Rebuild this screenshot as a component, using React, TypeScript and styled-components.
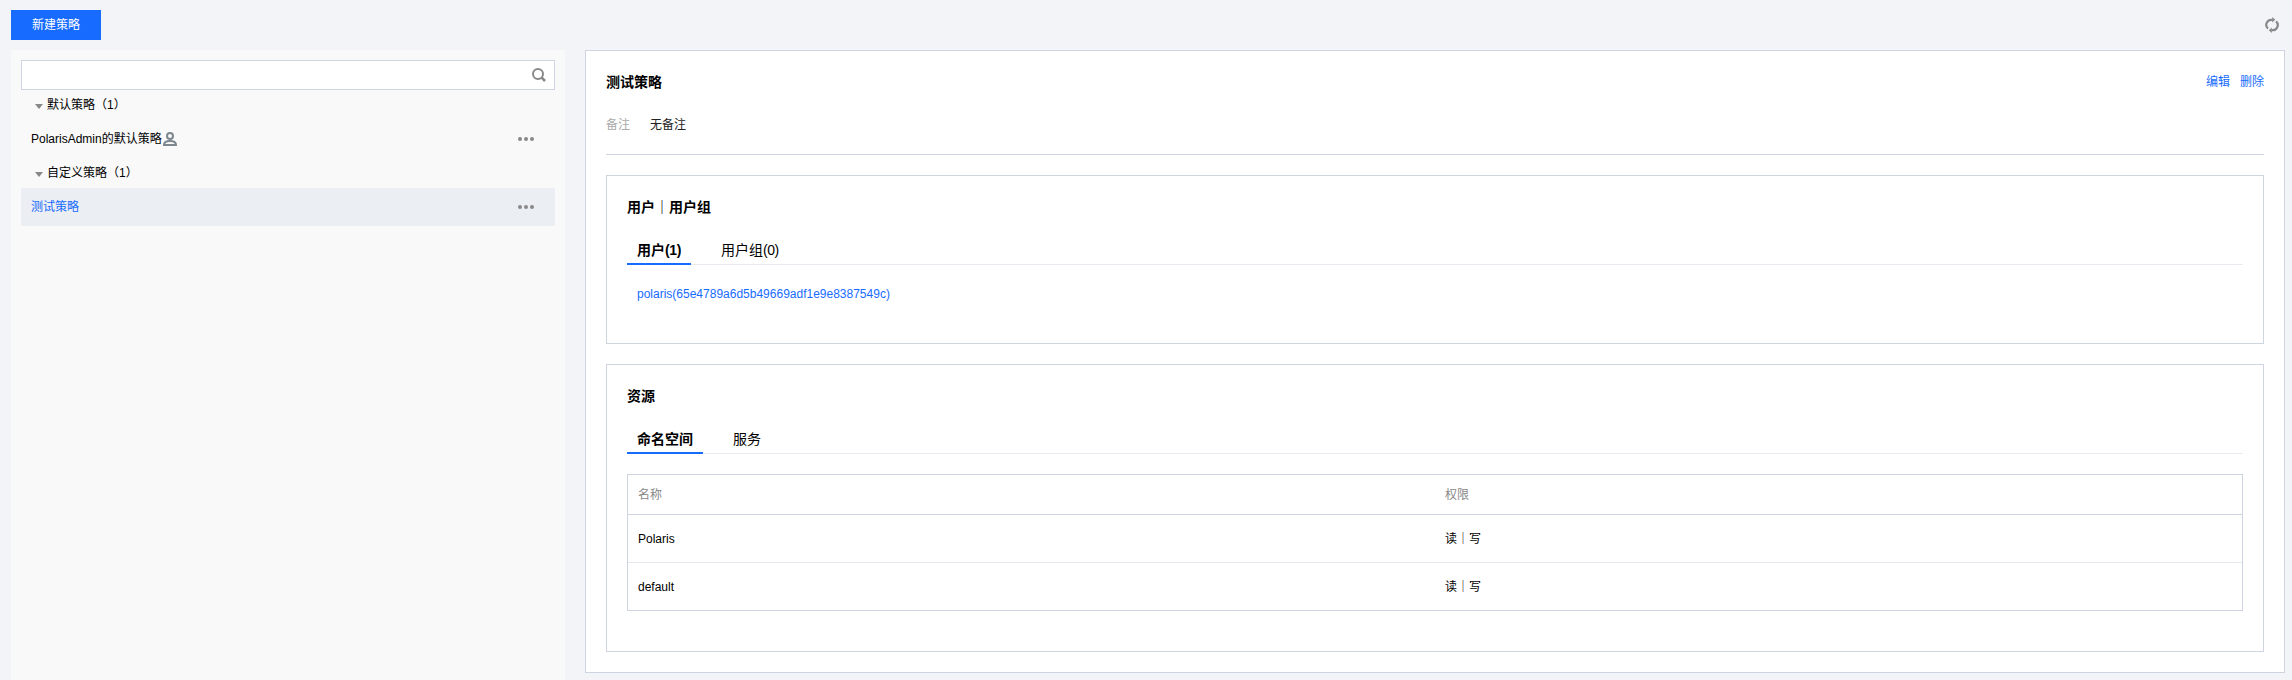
import React from "react";
import styled, { createGlobalStyle } from "styled-components";

const Global = createGlobalStyle`
  * { box-sizing: border-box; }
  body {
    margin: 0;
    background: #f3f4f8;
    color: #000;
    font: 12px/18px "Liberation Sans", "Noto Sans CJK SC", sans-serif;
    text-spacing-trim: space-all;
  }
`;

const Page = styled.div`
  height: 680px;
  display: flex;
  flex-direction: column;
  overflow: hidden;
`;

const Toolbar = styled.header`
  height: 50px;
  flex: none;
  display: flex;
  align-items: center;
  justify-content: space-between;
  padding: 0 12px 0 11px;
`;

const PrimaryButton = styled.button`
  width: 90px;
  height: 30px;
  padding: 0;
  border: 0;
  background: #176cff;
  color: #fff;
  font: inherit;
`;

const IconButton = styled.button`
  display: flex;
  padding: 0;
  border: 0;
  background: none;
`;

const Columns = styled.main`
  flex: 1;
  min-height: 0;
  display: flex;
  gap: 20px;
  padding: 0 7px 0 11px;
`;

const Sidebar = styled.aside`
  width: 554px;
  flex: none;
  padding: 10px;
  background: #f9f9f9;
`;

const SearchBox = styled.div`
  height: 30px;
  display: flex;
  align-items: center;
  padding-right: 7px;
  border: 1px solid #cfd5e0;
  background: #fff;
`;

const SearchInput = styled.input`
  flex: 1;
  height: 28px;
  padding: 0 10px;
  border: 0;
  outline: 0;
  background: none;
  font: inherit;
`;

const GroupHeader = styled.div`
  height: 30px;
  display: flex;
  align-items: center;
  gap: 4px;
  padding-left: 14px;
`;

const PolicyRow = styled.div<{ $active?: boolean }>`
  height: 38px;
  display: flex;
  align-items: center;
  justify-content: space-between;
  padding: 0 20px 0 10px;
  background: ${(p) => (p.$active ? "#ebeef3" : "transparent")};
  color: ${(p) => (p.$active ? "#176cff" : "#000")};
`;

const PolicyName = styled.span`
  display: flex;
  align-items: center;
`;

const Detail = styled.section`
  flex: 1;
  height: 623px;
  padding: 20px;
  border: 1px solid #cfd5e0;
  background: #fff;
`;

const DetailHeader = styled.div`
  height: 22px;
  display: flex;
  align-items: center;
  justify-content: space-between;
`;

const Title = styled.h3`
  margin: 0;
  font-size: 14px;
  line-height: 22px;
  font-weight: 700;
`;

const Actions = styled.div`
  display: flex;
  gap: 10px;
`;

const Link = styled.a`
  color: #176cff;
`;

const Remark = styled.div`
  display: flex;
  gap: 20px;
  margin-top: 23px;
  padding-bottom: 20px;
  border-bottom: 1px solid #cfd5e0;
`;

const RemarkLabel = styled.span`
  color: #aaa;
`;

const RemarkText = styled.span`
  color: #222;
`;

const Card = styled.section<{ $height: number }>`
  height: ${(p) => p.$height}px;
  margin-top: 20px;
  padding: 20px;
  border: 1px solid #cfd5e0;
`;

const Tabs = styled.div`
  height: 30px;
  display: flex;
  gap: 20px;
  margin-top: 17px;
  box-shadow: inset 0 -1px #e7eaef;
`;

const Tab = styled.button<{ $active?: boolean }>`
  height: 30px;
  padding: 1px 10px 0;
  border: 0;
  border-bottom: 2px solid ${(p) => (p.$active ? "#176cff" : "transparent")};
  background: none;
  color: #000;
  font: ${(p) => (p.$active ? 700 : 400)} 14px/22px "Liberation Sans", "Noto Sans CJK SC", sans-serif;
`;

const Count = styled.span`
  letter-spacing: -0.4px;
`;

const TabBody = styled.div`
  padding: 20px 10px;
`;

const Table = styled.div`
  margin-top: 20px;
  border: 1px solid #cfd5e0;
`;

const TableRow = styled.div<{ $head?: boolean }>`
  height: ${(p) => (p.$head ? 40 : 48)}px;
  display: grid;
  grid-template-columns: 1fr 1fr;
  align-items: center;
  border-bottom: 1px solid ${(p) => (p.$head ? "#cfd5e0" : "#e5e8ef")};
  color: ${(p) => (p.$head ? "#888" : "#000")};
  &:last-child {
    height: 47px;
    border-bottom: 0;
  }
`;

const Cell = styled.span`
  padding: 0 10px;
`;

const Caret = () => (
  <svg width="8" height="8" viewBox="0 0 8 8">
    <path d="M0 3h8L4 8z" fill="#888" />
  </svg>
);

const UserIcon = () => (
  <svg width="16" height="16" viewBox="0 0 16 16" fill="none" stroke="#7c878e" strokeWidth="2">
    <circle cx="8" cy="5" r="3" />
    <path d="M2 14c0-2.500 2.500-4 6-4s6 1.500 6 4z" />
  </svg>
);

const SearchIcon = () => (
  <svg width="16" height="16" viewBox="0 0 16 16" fill="none" stroke="#888" strokeWidth="2">
    <circle cx="7" cy="7" r="5" />
    <path d="M10.700 10.700l3.300 3.300" strokeWidth="2.600" />
  </svg>
);

const MoreIcon = () => (
  <svg width="18" height="4" viewBox="0 0 18 4" fill="#888">
    <circle cx="3" cy="2" r="2" />
    <circle cx="9" cy="2" r="2" />
    <circle cx="15" cy="2" r="2" />
  </svg>
);

const RefreshIcon = () => (
  <svg width="16" height="16" viewBox="0 0 16 16">
    <g fill="none" stroke="#888" strokeWidth="2.200">
      <path d="M4 11.600A5 5 0 0 1 8.500 3" />
      <path d="M12 4.400A5 5 0 0 1 7.500 13" />
    </g>
    <path d="M8.200 0l3 2.800-3 2.800zM7.800 10.400V16l-3-2.800z" fill="#888" />
  </svg>
);

const rows = [
  { name: "Polaris", access: "读｜写" },
  { name: "default", access: "读｜写" },
];

export default function App() {
  return (
    <Page>
      <Global />
      <Toolbar>
        <PrimaryButton>新建策略</PrimaryButton>
        <IconButton aria-label="刷新"><RefreshIcon /></IconButton>
      </Toolbar>
      <Columns>
        <Sidebar>
          <SearchBox>
            <SearchInput />
            <SearchIcon />
          </SearchBox>
          <GroupHeader><Caret />默认策略（1）</GroupHeader>
          <PolicyRow>
            <PolicyName>PolarisAdmin的默认策略<UserIcon /></PolicyName>
            <MoreIcon />
          </PolicyRow>
          <GroupHeader><Caret />自定义策略（1）</GroupHeader>
          <PolicyRow $active>
            <PolicyName>测试策略</PolicyName>
            <MoreIcon />
          </PolicyRow>
        </Sidebar>
        <Detail>
          <DetailHeader>
            <Title>测试策略</Title>
            <Actions>
              <Link>编辑</Link>
              <Link>删除</Link>
            </Actions>
          </DetailHeader>
          <Remark>
            <RemarkLabel>备注</RemarkLabel>
            <RemarkText>无备注</RemarkText>
          </Remark>
          <Card $height={169}>
            <Title>用户｜用户组</Title>
            <Tabs>
              <Tab $active>用户<Count>(1)</Count></Tab>
              <Tab>用户组<Count>(0)</Count></Tab>
            </Tabs>
            <TabBody>
              <Link>polaris(65e4789a6d5b49669adf1e9e8387549c)</Link>
            </TabBody>
          </Card>
          <Card $height={288}>
            <Title>资源</Title>
            <Tabs>
              <Tab $active>命名空间</Tab>
              <Tab>服务</Tab>
            </Tabs>
            <Table>
              <TableRow $head>
                <Cell>名称</Cell>
                <Cell>权限</Cell>
              </TableRow>
              {rows.map((row) => (
                <TableRow key={row.name}>
                  <Cell>{row.name}</Cell>
                  <Cell>{row.access}</Cell>
                </TableRow>
              ))}
            </Table>
          </Card>
        </Detail>
      </Columns>
    </Page>
  );
}
